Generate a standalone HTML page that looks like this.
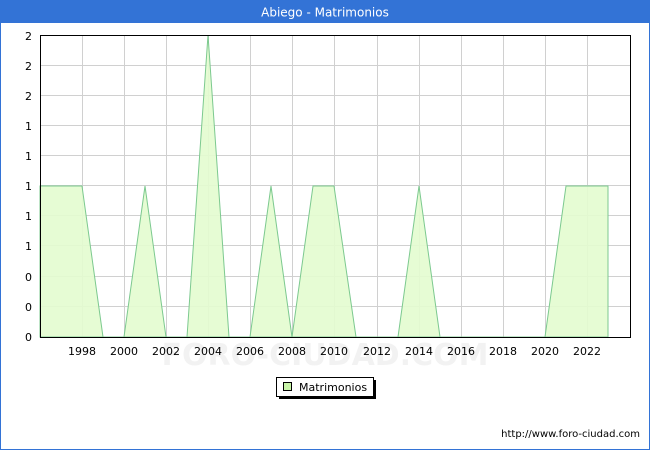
<!DOCTYPE html>
<html><head><style>
html,body{margin:0;padding:0;background:#fff;}
svg{display:block;font-family:"DejaVu Sans","Liberation Sans",sans-serif;}
</style></head><body>
<svg width="650" height="450" viewBox="0 0 650 450" xmlns="http://www.w3.org/2000/svg">
<rect x="0.5" y="0.5" width="649" height="449" fill="#fff" stroke="#3373d6"/>
<rect x="0" y="0" width="650" height="23" fill="#3373d6"/>
<text x="325" y="16.5" text-anchor="middle" font-size="12" fill="#fff">Abiego - Matrimonios</text>
<g stroke="#d0d0d0" stroke-width="1">
<line x1="40" y1="65.5" x2="630" y2="65.5"/><line x1="40" y1="95.5" x2="630" y2="95.5"/>
<line x1="40" y1="125.5" x2="630" y2="125.5"/><line x1="40" y1="155.5" x2="630" y2="155.5"/>
<line x1="40" y1="185.5" x2="630" y2="185.5"/><line x1="40" y1="215.5" x2="630" y2="215.5"/>
<line x1="40" y1="245.5" x2="630" y2="245.5"/><line x1="40" y1="276.5" x2="630" y2="276.5"/>
<line x1="40" y1="306.5" x2="630" y2="306.5"/>
<line x1="82.5" y1="35" x2="82.5" y2="337"/><line x1="124.5" y1="35" x2="124.5" y2="337"/>
<line x1="166.5" y1="35" x2="166.5" y2="337"/><line x1="208.5" y1="35" x2="208.5" y2="337"/>
<line x1="250.5" y1="35" x2="250.5" y2="337"/><line x1="292.5" y1="35" x2="292.5" y2="337"/>
<line x1="334.5" y1="35" x2="334.5" y2="337"/><line x1="377.5" y1="35" x2="377.5" y2="337"/>
<line x1="419.5" y1="35" x2="419.5" y2="337"/><line x1="461.5" y1="35" x2="461.5" y2="337"/>
<line x1="503.5" y1="35" x2="503.5" y2="337"/><line x1="545.5" y1="35" x2="545.5" y2="337"/>
<line x1="587.5" y1="35" x2="587.5" y2="337"/>
</g>
<polygon fill="#e3fccf" fill-opacity="0.9" stroke="#7cc98f" stroke-width="1" points="40,186 61,186 82,186 103,337 124,337 145,186 166,337 187,337 208,35 229,337 250,337 271,186 292,337 313,186 334,186 356,337 377,337 398,337 419,186 440,337 461,337 482,337 503,337 524,337 545,337 566,186 587,186 608,186 608,337 40,337"/>
<rect x="40.5" y="35.5" width="590" height="302" fill="none" stroke="#000"/>
<g font-size="11" fill="#000" text-anchor="end">
<text x="32" y="40">2</text><text x="32" y="70">2</text><text x="32" y="100">2</text>
<text x="32" y="130">1</text><text x="32" y="160">1</text><text x="32" y="190">1</text>
<text x="32" y="220">1</text><text x="32" y="250">1</text><text x="32" y="281">0</text>
<text x="32" y="311">0</text><text x="32" y="341">0</text>
</g>
<g font-size="11" fill="#000" text-anchor="middle">
<text x="82" y="355">1998</text><text x="124" y="355">2000</text><text x="166" y="355">2002</text>
<text x="208" y="355">2004</text><text x="250" y="355">2006</text><text x="292" y="355">2008</text>
<text x="334" y="355">2010</text><text x="377" y="355">2012</text><text x="419" y="355">2014</text>
<text x="461" y="355">2016</text><text x="503" y="355">2018</text><text x="545" y="355">2020</text>
<text x="587" y="355">2022</text>
</g>
<text x="325" y="365" text-anchor="middle" font-size="30" fill="#000" fill-opacity="0.05" font-weight="bold">FORO-CIUDAD.COM</text>
<rect x="279" y="380" width="97" height="19" fill="#000"/>
<rect x="276.5" y="377.5" width="97" height="19" fill="#fff" stroke="#000"/>
<rect x="283.5" y="382.5" width="8" height="8" fill="#c8f4a8" stroke="#000"/>
<text x="299" y="391" font-size="11" fill="#000">Matrimonios</text>
<text x="640" y="437" text-anchor="end" font-size="10" fill="#000">http://www.foro-ciudad.com</text>
</svg>
</body></html>
